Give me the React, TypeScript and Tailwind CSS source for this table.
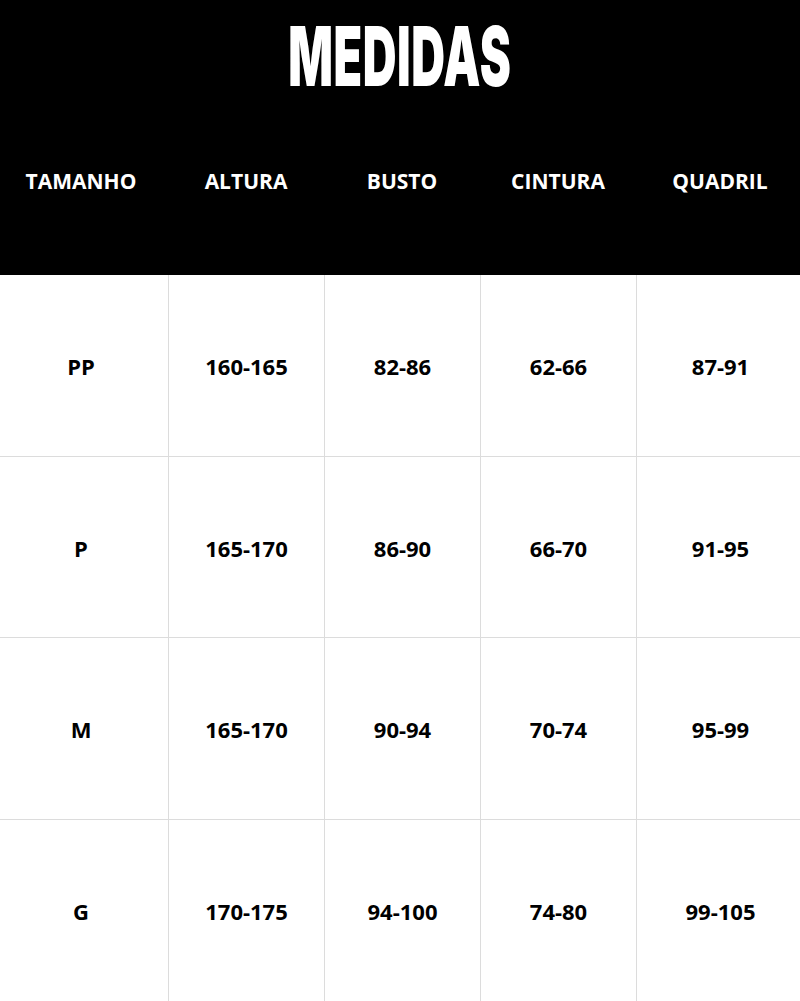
const headers = ['TAMANHO', 'ALTURA', 'BUSTO', 'CINTURA', 'QUADRIL'];

const rows = [
  { h: 'h-[182px]', cells: ['PP', '160-165', '82-86', '62-66', '87-91'] },
  { h: 'h-[181px]', cells: ['P', '165-170', '86-90', '66-70', '91-95'] },
  { h: 'h-[182px]', cells: ['M', '165-170', '90-94', '70-74', '95-99'] },
  { h: 'h-[181px]', cells: ['G', '170-175', '94-100', '74-80', '99-105'] },
];

const cols = 'grid grid-cols-[168px_156px_156px_156px_164px]';

export default function App() {
  return (
    <div className="w-[800px] h-[1001px] bg-white overflow-hidden font-['Open_Sans',sans-serif]">
      <div className="bg-black h-[275px] flex flex-col">
        <div className="h-[114px] flex items-center justify-center">
          <h1 className="inline-block scale-x-[0.57] text-[82px] leading-none font-black text-white font-['Inter',sans-serif] tracking-[1px]">
            MEDIDAS
          </h1>
        </div>
        <div className={`${cols} h-[136px] items-center`}>
          {headers.map((t, i) => (
            <div
              key={t}
              className={`text-center text-white font-bold text-[21px] ${i === 0 ? 'pr-[6px]' : ''} ${i === 4 ? 'pl-[4px]' : ''}`}
            >
              {t}
            </div>
          ))}
        </div>
      </div>
      {rows.map((r, ri) => (
        <div key={ri} className={`${cols} ${r.h} ${ri < 3 ? 'border-b border-[#dcdcdc]' : ''}`}>
          {r.cells.map((c, i) => (
            <div
              key={i}
              className={`flex items-center justify-center text-black font-bold text-[22px] pt-[2px] ${i > 0 ? 'border-l border-[#dcdcdc]' : 'pr-[6px]'} ${i === 4 ? 'pl-[4px]' : ''}`}
            >
              {c}
            </div>
          ))}
        </div>
      ))}
    </div>
  );
}
